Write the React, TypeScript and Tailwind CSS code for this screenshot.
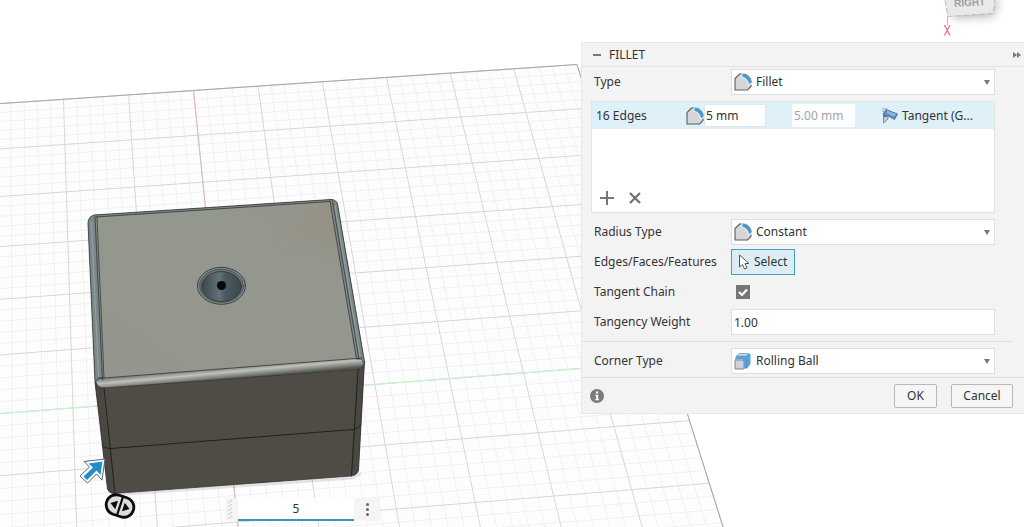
import type { ReactNode } from "react";

type Point = [number, number];

// Ground plane corners for grid units (0,0), (6,0), (6,8) and (0,8).
const CORNERS: Point[] = [
  [193.5, 90.5],
  [577, 64.5],
  [709.3, 483.3],
  [237.5, 522],
];

function project(u: number, v: number): Point {
  const [[x0, y0], [x1, y1], [x2, y2], [x3, y3]] = CORNERS;
  const dx1 = x1 - x2;
  const dx2 = x3 - x2;
  const dx3 = x0 - x1 + x2 - x3;
  const dy1 = y1 - y2;
  const dy2 = y3 - y2;
  const dy3 = y0 - y1 + y2 - y3;
  const det = dx1 * dy2 - dx2 * dy1;
  const g = (dx3 * dy2 - dx2 * dy3) / det;
  const h = (dx1 * dy3 - dx3 * dy1) / det;
  const s = u / 6;
  const t = v / 8;
  const w = g * s + h * t + 1;
  return [
    ((x1 - x0 + g * x1) * s + (x3 - x0 + h * x3) * t + x0) / w,
    ((y1 - y0 + g * y1) * s + (y3 - y0 + h * y3) * t + y0) / w,
  ];
}

function segment(a: Point, b: Point) {
  return `M${a[0].toFixed(2)} ${a[1].toFixed(2)}L${b[0].toFixed(2)} ${b[1].toFixed(2)}`;
}

const LEFT = -5;
const RIGHT = 6;
const BOTTOM = 10;

function gridPath(divisions: number, skipEvery: number) {
  let d = "";
  for (let i = LEFT * divisions; i <= RIGHT * divisions; i++) {
    if (skipEvery && i % skipEvery === 0) continue;
    d += segment(project(i / divisions, 0), project(i / divisions, BOTTOM));
  }
  for (let i = 0; i <= BOTTOM * divisions; i++) {
    if (skipEvery && i % skipEvery === 0) continue;
    d += segment(project(LEFT, i / divisions), project(RIGHT, i / divisions));
  }
  return d;
}

function Ground() {
  return (
    <g fill="none">
      <path d={gridPath(25, 5)} stroke="#fafafa" strokeWidth="0.7" />
      <path d={gridPath(5, 5)} stroke="#eeeeee" strokeWidth="0.9" />
      <path d={gridPath(1, 0)} stroke="#d6d6d6" strokeWidth="1" />
      <path d={segment(project(LEFT, 0), project(RIGHT, 0)) + segment(project(RIGHT, 0), project(RIGHT, BOTTOM))} stroke="#a6a6a6" strokeWidth="1" />
      <path d={segment(project(LEFT, 6), project(RIGHT, 6))} stroke="#c8efc8" strokeWidth="1.2" />
      <path d={segment(project(0, 0), project(0, BOTTOM))} stroke="#dcbdb9" strokeWidth="1.1" />
    </g>
  );
}

function BoxModel() {
  return (
    <g strokeLinejoin="round" strokeLinecap="round">
      <path d="M112 495L352 478L360 474" fill="none" stroke="#000" strokeOpacity="0.1" strokeWidth="3" />
      <path d="M88 223Q88 217 94 215L331 199.500Q336 199.500 337.500 204L364.500 362L358.500 470Q357.500 475 351 476L113 493.500Q109 493 107.500 489L95 382Z" fill="#4f4c45" />
      <path d="M95 382L102 388L115 493.500Q109 493 107.500 489Z" fill="#4a4740" />
      <path d="M357 369L364.500 362L358.500 470Q357.500 475 351 476Z" fill="#4a4741" />
      <path d="M88 223Q88 217 94 215L331 199.500Q336 199.500 337.500 204L364.500 360Q365 367 359 369L103 388Q97 387 95 380Z" fill="#7b8788" />
      <path d="M96 217L330 201.500L356.500 359L103 378.500Z" fill="url(#topFace)" />
      <path d="M296 216L331 203L340 252Q320 238 282 240Q300 230 306 216Z" fill="#9b8d79" fillOpacity="0.35" filter="url(#soften)" />
      <path d="M99 378.500L361 358Q366 364 361 369L101 388Q94 384 99 378.500Z" fill="url(#bevel)" />
      <path d="M91.500 222L98.500 376M335 206L360 357" fill="none" stroke="#929e9f" strokeWidth="1.200" />
      <g fill="none" stroke="#343736" strokeWidth="0.8">
        <path d="M88 223Q88 217 94 215L331 199.500Q336 199.500 337.500 204L364.500 362L358.500 470Q357.500 475 351 476L113 493.500Q109 493 107.500 489L95 382Z" />
        <path d="M96 217L330 201.500M95 216.500L102.500 380M97 217L104 378M330 201L356.500 359M332.500 201L359 359" />
        <path d="M98 378.500L362 358M96 383Q98 388 104 388L357 369.500Q364 368 364.500 362M96 381Q98 377 103 378M357 359Q363 358 363 362" />
      </g>
      <path d="M104 388L115 493M358 369.500L351.500 476M102 445Q104 448.500 111 448.500L353 429.500Q359 428.500 361 425" fill="none" stroke="#1d1c19" strokeWidth="0.900" />
      <ellipse cx="221.500" cy="285.800" rx="24" ry="18.500" fill="#868d89" stroke="#30383a" strokeWidth="0.9" />
      <ellipse cx="221.500" cy="285.800" rx="21.800" ry="16.500" fill="#6c7677" stroke="#39474b" strokeWidth="0.8" />
      <ellipse cx="221.500" cy="286.500" rx="19.800" ry="15" fill="url(#hole)" stroke="#27353a" strokeWidth="0.8" />
      <circle cx="221.500" cy="285.500" r="4.500" fill="#050709" />
    </g>
  );
}

function Manipulators() {
  return (
    <g>
      <path d="M105 459L84 461.500L89.500 467L80 476L87.500 483L96.500 474L102 480Z" fill="#fff" stroke="#53627b" strokeWidth="1" strokeLinejoin="round" />
      <path d="M102.500 461.500L88.500 463.500L93 467.500L83.500 476.500L87 480L96.500 470.500L100.500 475Z" fill="#218fc7" />
      <g transform="translate(120 506) rotate(18)">
        <rect x="-14" y="-10" width="28" height="20" rx="10" fill="#ddd" stroke="#0b0b0b" strokeWidth="2.800" />
        <path d="M0-10V10" stroke="#0b0b0b" strokeWidth="2.200" />
        <path d="M-10 0L-3.500-4.500V4.500ZM10 0L3.500-4.500V4.500Z" fill="#0b0b0b" />
      </g>
    </g>
  );
}

function ViewCube() {
  return (
    <g>
      <path d="M950 0L954 19L993 17L1000 0Z" fill="#000" fillOpacity="0.25" filter="url(#soften)" />
      <path d="M945-4L948 16.500L993 13.500L996-4Z" fill="#e9e9e9" />
      <path d="M945 0L948 16.500L993 13.500L995 0" fill="none" stroke="#b4b4b4" strokeWidth="0.900" strokeDasharray="6 2" />
      <text x="954" y="6" transform="rotate(-3 970 3)" fontFamily="Liberation Sans, sans-serif" fontWeight="700" fontSize="10" fill="#a0a0a0">RIGHT</text>
      <path d="M947.500 16V25" stroke="#f3a5a5" strokeWidth="1" />
      <path d="M944.500 25L950 35.500M950 25L944.500 35.500" stroke="#ee7378" strokeWidth="1.300" />
    </g>
  );
}

function Viewport() {
  return (
    <svg className="absolute inset-0 h-full w-full" viewBox="0 0 1024 527" preserveAspectRatio="xMinYMin slice" aria-label="Model viewport">
      <defs>
        <linearGradient id="topFace" x1="0" y1="1" x2="1" y2="0">
          <stop offset="0" stopColor="#92968d" />
          <stop offset="0.7" stopColor="#94978d" />
          <stop offset="1" stopColor="#94948a" />
        </linearGradient>
        <linearGradient id="bevel" gradientUnits="userSpaceOnUse" x1="230" y1="368" x2="231" y2="379">
          <stop offset="0" stopColor="#858982" />
          <stop offset="0.35" stopColor="#bfc2bc" />
          <stop offset="0.65" stopColor="#8f928c" />
          <stop offset="1" stopColor="#55554f" />
        </linearGradient>
        <linearGradient id="hole" x1="0" x2="1" y1="0" y2="0">
          <stop offset="0" stopColor="#3c484d" />
          <stop offset="0.45" stopColor="#647077" />
          <stop offset="0.6" stopColor="#4b585f" />
          <stop offset="1" stopColor="#3d494f" />
        </linearGradient>
        <filter id="soften" x="-30%" y="-50%" width="160%" height="200%">
          <feGaussianBlur stdDeviation="4" />
        </filter>
      </defs>
      <Ground />
      <BoxModel />
      <Manipulators />
      <ViewCube />
    </svg>
  );
}

function FilletIcon() {
  return (
    <svg className="h-[18px] w-[18px] shrink-0" viewBox="0 0 18 18" fill="none" aria-hidden="true">
      <path d="M1 17V5.500L5 1H8L7.500 4.500C11.500 5 14 8 14.500 12.500L17 11.500V13.500L13.500 17Z" fill="#d6d6d8" />
      <path d="M8.500 1H5.500L1 5.500V17H13.500L17 13.500V11.500" stroke="#5d5d5f" strokeWidth="1.100" />
      <path d="M8.200 0.800C13.500 0.600 17.500 4.500 17.500 10L14.500 12C14.500 7.500 11.800 4.800 7.700 4.300Z" fill="#4a98cf" stroke="#fff" strokeWidth="0.800" />
      <path d="M9 1C13.500 1 17 4.500 17.300 9.500" stroke="#2f6f9e" strokeWidth="0.800" />
    </svg>
  );
}

function RollingBallIcon() {
  return (
    <svg className="h-[18px] w-[18px] shrink-0" viewBox="0 0 18 18" aria-hidden="true">
      <path d="M1 8H10V17H1Z" fill="#d2d2d4" stroke="#77797c" strokeWidth="0.900" />
      <path d="M1 7.500Q1 5 2.500 4L5 1.800H16.500V12L13 16.500H10V9Q10 7.500 8.500 7.500Z" fill="#57a3dc" />
      <path d="M5 1.500L2.500 4H12L15 1.500Z" fill="#c2ddef" stroke="#79899a" strokeWidth="0.600" />
      <path d="M12.500 6.500V15.500" stroke="#4488bb" strokeWidth="0.600" fill="none" />
    </svg>
  );
}

function TangentIcon() {
  return (
    <svg className="h-4 w-4 shrink-0" viewBox="0 0 16 16" aria-hidden="true">
      <path d="M1.500 15V5L6 7V11Z" fill="#c6cbd3" stroke="#7a828c" strokeWidth="0.900" />
      <path d="M4 1.500L15.500 6L12.500 11.500L6.500 8L2 8.500V5Z" fill="#5c8fc3" stroke="#3f5e80" strokeWidth="0.800" />
      <path d="M5 2.500L14 6L12 8.500L4.500 5Z" fill="#8fb7df" />
      <path d="M0.500 0.800H5M1 4V1" stroke="#777" strokeWidth="0.800" fill="none" strokeDasharray="2 1" />
    </svg>
  );
}

function SelectField({ id, value, icon }: { id: string; value: string; icon: ReactNode }) {
  return (
    <div className="relative w-[264px]">
      <select id={id} defaultValue={value} className="block h-[26px] w-full appearance-none rounded-none border border-[#dedede] bg-white pr-6 pl-6 text-[#333] outline-none">
        <option>{value}</option>
      </select>
      <span className="pointer-events-none absolute inset-y-0 left-[3px] flex items-center">{icon}</span>
      <span className="pointer-events-none absolute inset-y-0 right-[5px] flex items-center">
        <svg className="h-[5px] w-[6px]" viewBox="0 0 6 5" aria-hidden="true">
          <path d="M0 0H6L3 5Z" fill="#777" />
        </svg>
      </span>
    </div>
  );
}

function Row({ label, htmlFor, children }: { label: string; htmlFor: string; children: ReactNode }) {
  return (
    <div className="flex h-[26px] items-center pl-[3px]">
      <label htmlFor={htmlFor} className="min-w-0 flex-1">
        {label}
      </label>
      <div className="w-[264px]">{children}</div>
    </div>
  );
}

function EdgeSets() {
  return (
    <div className="my-[6px] flex h-[112px] flex-col border border-[#e2e2e2] bg-white">
      <table className="w-full table-fixed border-collapse bg-[#dff0f9]">
        <tbody>
          <tr className="h-[27px]">
            <td className="w-[94px] p-0 pl-1">16 Edges</td>
            <td className="w-[106px] p-0">
              <div className="flex items-center">
                <FilletIcon />
                <input aria-label="Radius" defaultValue="5 mm" className="h-[23px] w-[62px] border border-[#e2e6e8] bg-white pl-px outline-none" />
              </div>
            </td>
            <td className="w-[90px] p-0">
              <input aria-label="Distance" defaultValue="5.00 mm" disabled className="block h-[23px] w-[63px] bg-[#fcfdfd] pl-[2px] text-[#a5a5a5]" />
            </td>
            <td className="p-0">
              <div className="flex items-center gap-1 whitespace-nowrap">
                <TangentIcon />
                <span>Tangent (G...</span>
              </div>
            </td>
          </tr>
        </tbody>
      </table>
      <div className="mt-auto flex gap-[14px] px-2 pb-[7px]">
        <button type="button" aria-label="Add" className="h-[14px] w-[14px]">
          <svg viewBox="0 0 14 14" aria-hidden="true">
            <path d="M7 0V14M0 7H14" stroke="#777" strokeWidth="2" />
          </svg>
        </button>
        <button type="button" aria-label="Remove" className="h-[14px] w-[14px]">
          <svg viewBox="0 0 14 14" aria-hidden="true">
            <path d="M2 2L12 12M12 2L2 12" stroke="#707070" strokeWidth="2.200" />
          </svg>
        </button>
      </div>
    </div>
  );
}

function FilletPanel() {
  return (
    <section className="absolute top-[42px] right-0 w-[443px] border border-r-0 border-[#e8e8e8] bg-[#f3f3f3]">
      <header className="flex h-6 items-center border-b border-[#e2e2e2] pr-[3px] pl-[11px]">
        <button type="button" aria-label="Collapse" className="mr-2 flex h-4 w-2 items-center">
          <span className="block h-[2px] w-full bg-[#777]" />
        </button>
        <h1 className="flex-1">FILLET</h1>
        <button type="button" aria-label="Expand">
          <svg className="h-[6px] w-[8px]" viewBox="0 0 8 6" aria-hidden="true">
            <path d="M0 0L4 3L0 6ZM4 0L8 3L4 6Z" fill="#777" />
          </svg>
        </button>
      </header>
      <form>
        <div className="pt-[2px] pr-[29px] pl-[9px]">
          <Row label="Type" htmlFor="type">
            <SelectField id="type" value="Fillet" icon={<FilletIcon />} />
          </Row>
          <EdgeSets />
          <div className="flex flex-col gap-1">
            <Row label="Radius Type" htmlFor="radius-type">
              <SelectField id="radius-type" value="Constant" icon={<FilletIcon />} />
            </Row>
            <Row label="Edges/Faces/Features" htmlFor="selection">
              <button id="selection" type="button" className="flex h-[26px] w-[64px] items-center gap-[4px] border border-[#3fa3c0] bg-[#dcedf6] pl-[6px]">
                <svg className="h-4 w-3 shrink-0" viewBox="0 0 12 16" aria-hidden="true">
                  <path d="M1.500 1V13L4.500 10.500L6.500 15L9 14L7 9.500H11Z" fill="#fff" stroke="#555" strokeWidth="1" />
                </svg>
                Select
              </button>
            </Row>
            <Row label="Tangent Chain" htmlFor="tangent-chain">
              <span className="relative ml-[5px] block h-[14px] w-[14px]">
                <input id="tangent-chain" type="checkbox" defaultChecked className="block h-[14px] w-[14px] appearance-none bg-[#757575]" />
                <svg className="pointer-events-none absolute inset-0" viewBox="0 0 14 14" aria-hidden="true">
                  <path d="M3 7L6 10L11 4.500" fill="none" stroke="#fff" strokeWidth="2.200" />
                </svg>
              </span>
            </Row>
            <Row label="Tangency Weight" htmlFor="tangency-weight">
              <input id="tangency-weight" defaultValue="1.00" className="block h-[26px] w-full border border-[#dedede] bg-white pl-[2px] outline-none" />
            </Row>
          </div>
        </div>
        <hr className="mt-[6px] mr-[11px] mb-[6px] border-[#dedede]" />
        <div className="pr-[29px] pb-[3px] pl-[9px]">
          <Row label="Corner Type" htmlFor="corner-type">
            <SelectField id="corner-type" value="Rolling Ball" icon={<RollingBallIcon />} />
          </Row>
        </div>
        <footer className="flex h-9 items-center gap-[14px] border-t border-[#e0e0e0] pr-[11px] pl-2">
          <button type="button" aria-label="Information" className="mr-auto h-[14px] w-[14px]">
            <svg viewBox="0 0 14 14" aria-hidden="true">
              <circle cx="7" cy="7" r="7" fill="#7c7c7c" />
              <path d="M6 2.500H8.200V4.500H6ZM5.300 5.700H8.200V10H9V11.200H5.200V10H6.100V6.800H5.300Z" fill="#fff" />
            </svg>
          </button>
          <button type="button" className="h-6 w-[43px] rounded-[2px] border border-[#b8b8b8] bg-[#f6f6f6]">OK</button>
          <button type="button" className="h-6 w-[62px] rounded-[2px] border border-[#b8b8b8] bg-[#f6f6f6]">Cancel</button>
        </footer>
      </form>
    </section>
  );
}

function ValueInput() {
  return (
    <div className="absolute bottom-[6px] left-[225px] flex h-[23px] items-stretch bg-[#f5f5f5]">
      <svg className="h-[23px] w-[13px]" viewBox="0 0 13 23" aria-hidden="true">
        <path d="M3 5L7 2M3 9L7 6M3 13L7 10M3 17L7 14M3 21L7 18" stroke="#c8c8c8" strokeWidth="1" />
      </svg>
      <input aria-label="Fillet radius" defaultValue="5" className="w-[116px] border-b-2 border-[#3795bf] bg-white text-center outline-none" />
      <button type="button" aria-label="More options" className="flex w-[26px] flex-col items-center justify-center gap-[2px]">
        <span className="h-[3px] w-[3px] rounded-full bg-[#666]" />
        <span className="h-[3px] w-[3px] rounded-full bg-[#666]" />
        <span className="h-[3px] w-[3px] rounded-full bg-[#666]" />
      </button>
    </div>
  );
}

export default function App() {
  return (
    <main className="relative min-h-screen overflow-hidden bg-white font-['Noto_Sans',sans-serif] text-xs text-[#333]">
      <Viewport />
      <ValueInput />
      <FilletPanel />
    </main>
  );
}
